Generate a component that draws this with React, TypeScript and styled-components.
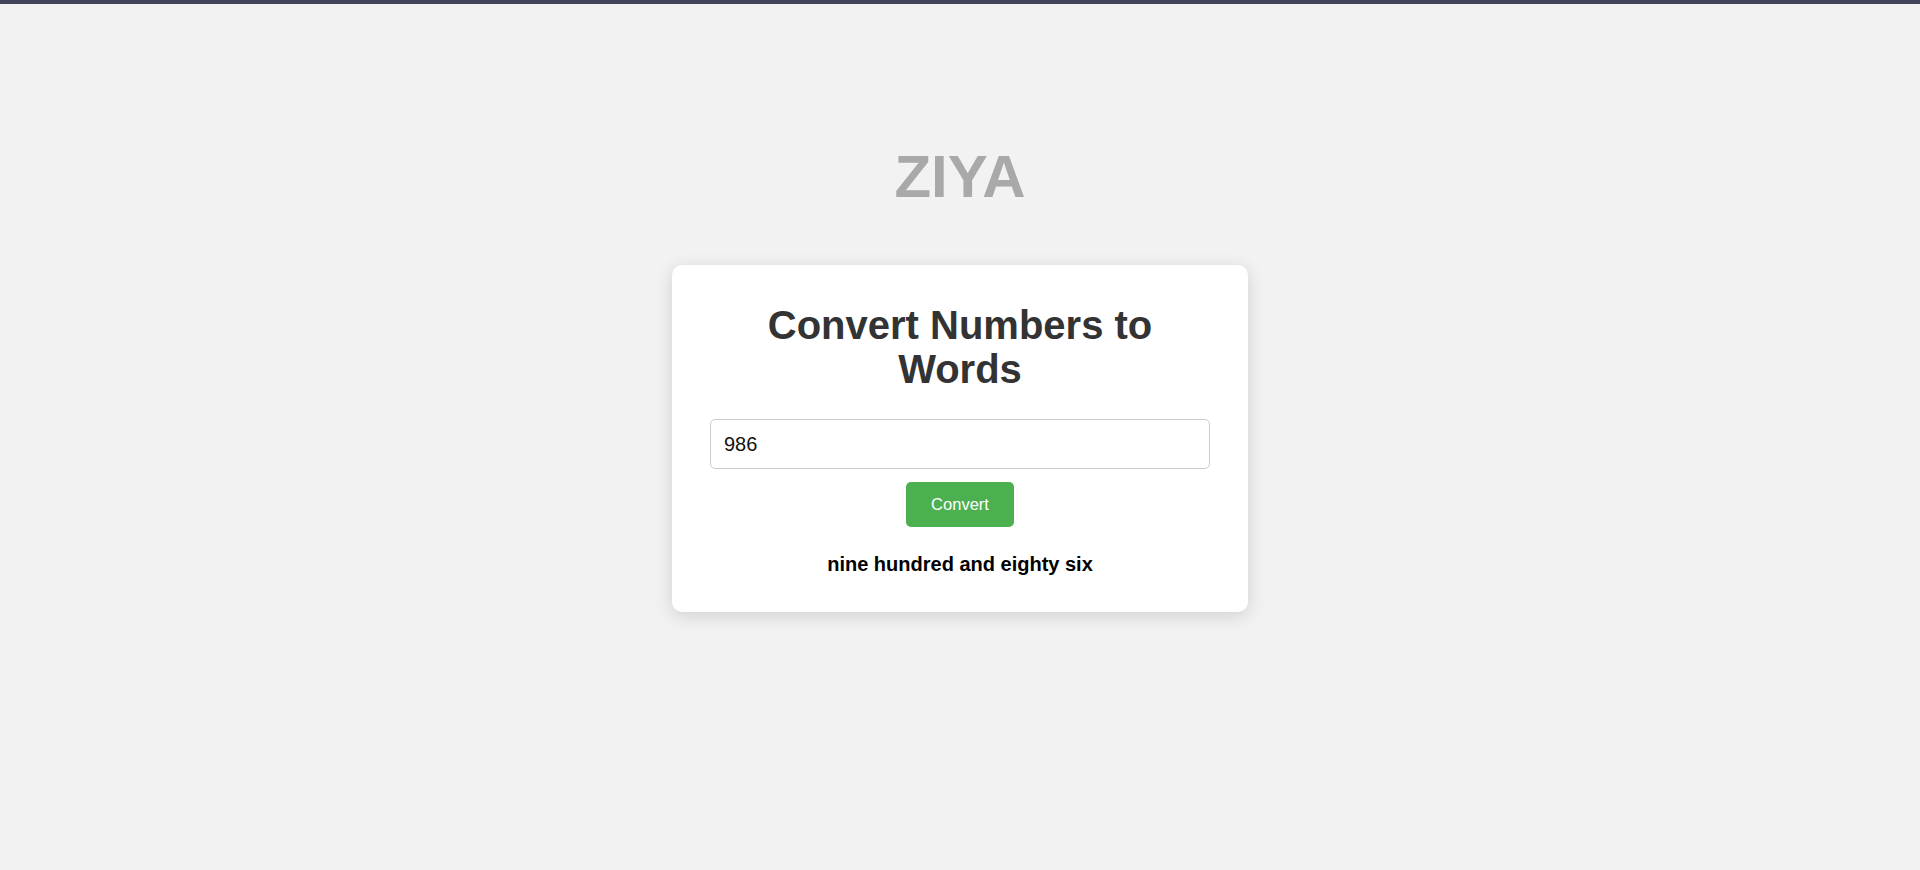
import React, { useState } from "react";
import styled, { createGlobalStyle } from "styled-components";

const GlobalStyle = createGlobalStyle`
  html, body {
    margin: 0;
    padding: 0;
    background: #f2f2f2;
    font-family: "Liberation Sans", Arial, sans-serif;
  }
  * { box-sizing: border-box; }
`;

const TopBar = styled.div`
  height: 4px;
  background: #41455a;
`;

const Page = styled.main`
  display: flex;
  flex-direction: column;
  align-items: center;
  padding-top: 138px;
  min-height: 866px;
`;

const Brand = styled.h1`
  margin: 0 0 54px;
  font-size: 60px;
  font-weight: 700;
  color: #a9a9a9;
  line-height: 69px;
`;

const Card = styled.section`
  width: 576px;
  padding: 38px 38px 36px;
  background: #ffffff;
  border-radius: 10px;
  box-shadow: 0 4px 18px rgba(0, 0, 0, 0.14);
  display: flex;
  flex-direction: column;
  align-items: center;
`;

const Title = styled.h2`
  margin: 0 0 28px;
  font-size: 40px;
  line-height: 44px;
  font-weight: 700;
  color: #333333;
  text-align: center;
`;

const NumberInput = styled.input`
  width: 500px;
  height: 50px;
  padding: 0 13px;
  border: 1px solid #cccccc;
  border-radius: 5px;
  font-family: "Liberation Sans", Arial, sans-serif;
  font-size: 20px;
  color: #111;
  background: #fff;
  outline: none;
`;

const ConvertButton = styled.button`
  margin-top: 13px;
  height: 45px;
  width: 108px;
  padding: 0;
  border: none;
  border-radius: 5px;
  background: #4caf50;
  color: #ffffff;
  font-family: "Liberation Sans", Arial, sans-serif;
  font-size: 16.5px;
  cursor: pointer;
`;

const Result = styled.p`
  margin: 26px 0 0;
  font-size: 20px;
  line-height: 23px;
  font-weight: 700;
  color: #000;
  text-align: center;
`;

export default function App() {
  const [value, setValue] = useState("986");
  return (
    <>
      <GlobalStyle />
      <TopBar />
      <Page>
        <Brand>ZIYA</Brand>
        <Card>
          <Title>Convert Numbers to Words</Title>
          <NumberInput value={value} onChange={(e) => setValue(e.target.value)} />
          <ConvertButton>Convert</ConvertButton>
          <Result>nine hundred and eighty six</Result>
        </Card>
      </Page>
    </>
  );
}
